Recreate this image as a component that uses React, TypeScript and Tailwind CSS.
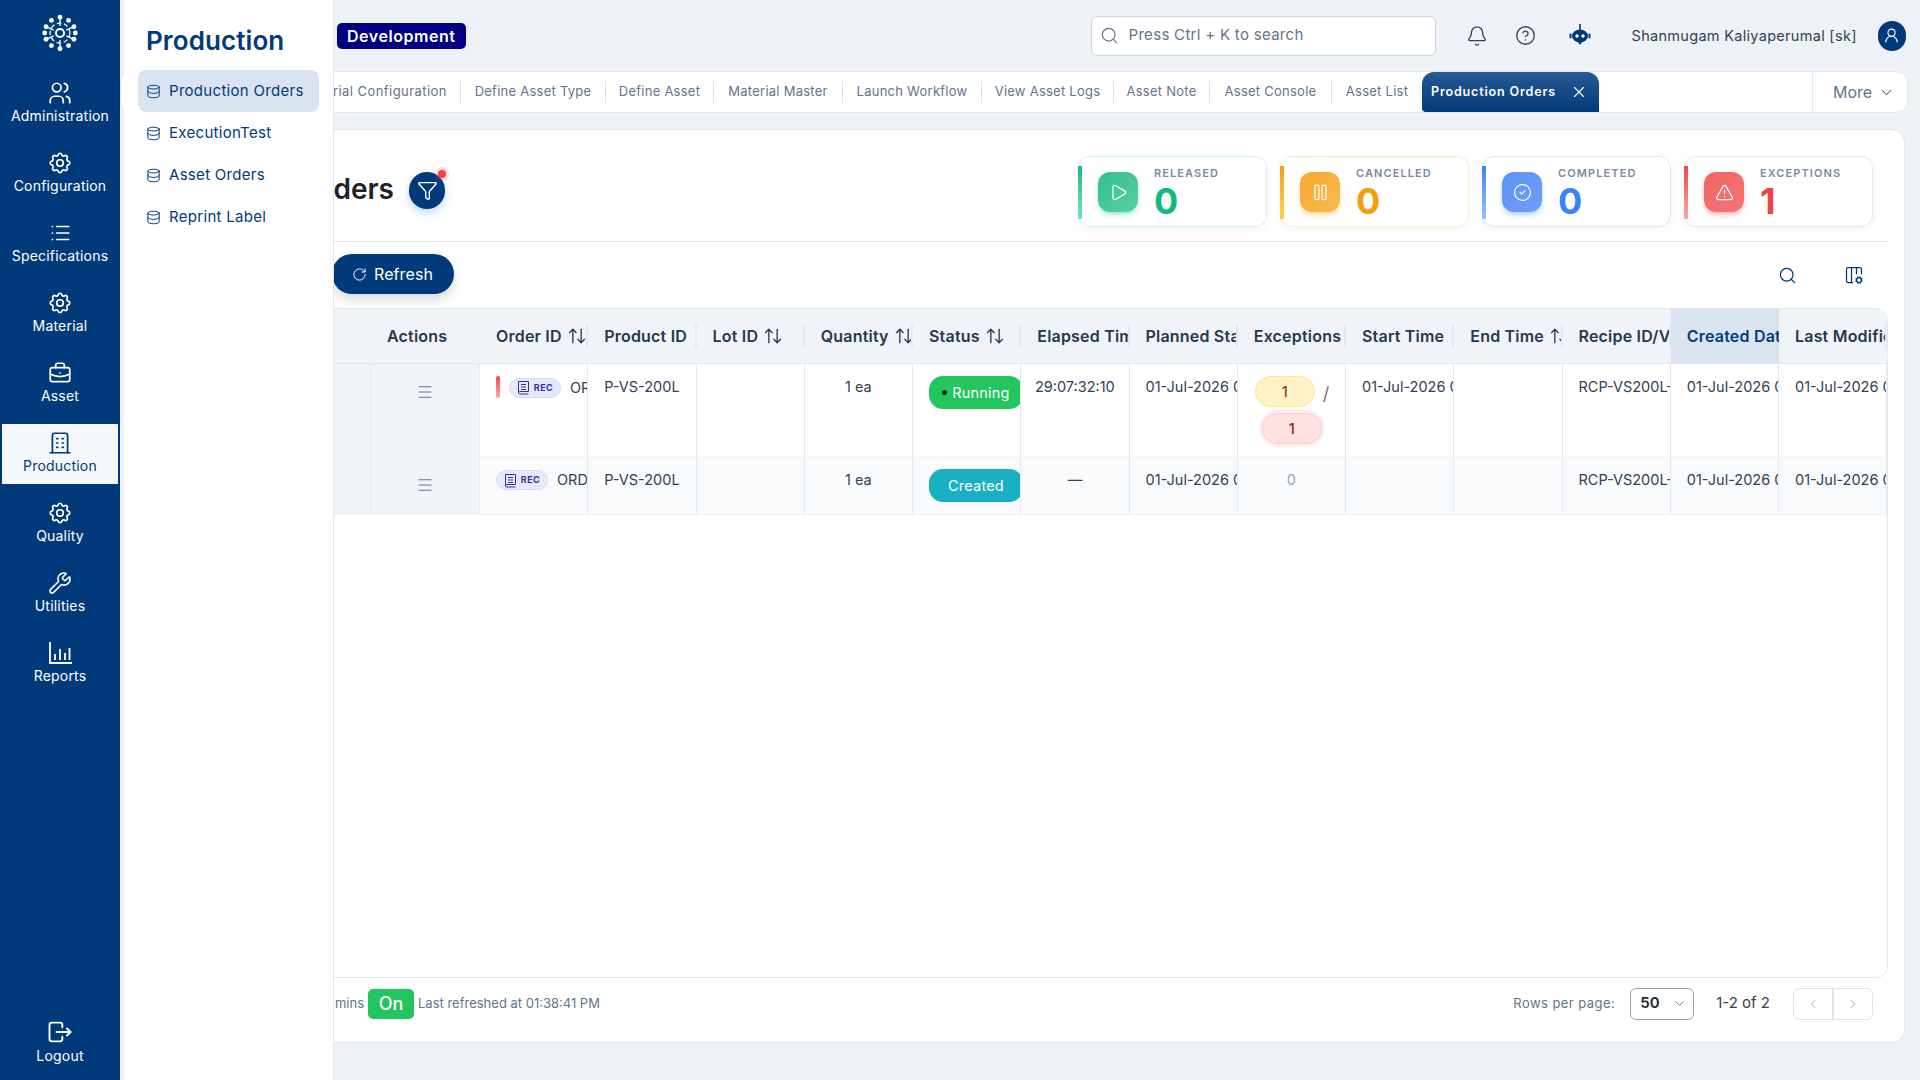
import React from 'react'
import {
  ArrowUpDown,
  Bell,
  ChevronDown,
  ChevronLeft,
  ChevronRight,
  CircleHelp,
  Columns3Cog,
  Database,
  Funnel,
  Menu,
  Play,
  Pause,
  CircleCheck,
  RotateCw,
  Search,
  TriangleAlert,
  UserRound,
  Wrench,
  X,
} from 'lucide-react'
import { TbBriefcase, TbBuilding, TbList, TbLogout, TbSettings, TbUsers } from 'react-icons/tb'

function Logo() {
  const dots: [number, number][] = [
    [20, 2.5], [29.5, 6], [35.5, 13], [37, 20], [35.5, 27], [29.5, 34], [20, 37.5], [10.5, 34], [4.5, 27], [3, 20], [4.5, 13], [10.5, 6],
  ]
  return (
    <svg width="36" height="38" viewBox="0 0 40 40" fill="none" stroke="white" strokeWidth="2.2" className="mt-[2px]">
      <circle cx="20" cy="20" r="4.5" />
      <circle cx="20" cy="20" r="11" strokeWidth="1.4" strokeDasharray="5 3" />
      {dots.map(([x, y], i) => (
        <g key={i}>
          <circle cx={x} cy={y} r="2.7" fill="white" stroke="none" />
          {i % 2 === 0 && <line x1={x} y1={y} x2={20 + (x - 20) * 0.45} y2={20 + (y - 20) * 0.45} strokeWidth="1.5" />}
        </g>
      ))}
    </svg>
  )
}

function ReportsIcon() {
  return (
    <svg width="24" height="24" viewBox="0 0 24 24" fill="none" stroke="white" strokeWidth="1.8">
      <path d="M2 1v21h22" />
      <path d="M7 13v6M12 8v11M17 12v7M21.5 7v12" />
    </svg>
  )
}

function BotIcon() {
  return (
    <svg width="22" height="26" viewBox="0 0 22 26" fill="#013a7a">
      <rect x="10.2" y="1" width="1.6" height="6" />
      <path d="M3 13a8 6.5 0 0 1 16 0a8 6.5 0 0 1-16 0z" />
      <rect x="0.5" y="10.5" width="2" height="5" rx="1" />
      <rect x="19.5" y="10.5" width="2" height="5" rx="1" />
      <path d="M9 19h4l-2 3z" />
      <circle cx="8" cy="13" r="1.7" fill="white" />
      <circle cx="14" cy="13" r="1.7" fill="white" />
    </svg>
  )
}

const railItems = [
  { label: 'Administration', icon: <TbUsers size={26} strokeWidth={1.6} /> },
  { label: 'Configuration', icon: <TbSettings size={26} strokeWidth={1.6} /> },
  { label: 'Specifications', icon: <TbList size={26} strokeWidth={1.6} /> },
  { label: 'Material', icon: <TbSettings size={26} strokeWidth={1.6} /> },
  { label: 'Asset', icon: <TbBriefcase size={26} strokeWidth={1.6} /> },
  { label: 'Production', icon: <TbBuilding size={26} strokeWidth={1.6} />, active: true },
  { label: 'Quality', icon: <TbSettings size={26} strokeWidth={1.6} /> },
  { label: 'Utilities', icon: <Wrench size={24} strokeWidth={1.6} /> },
  { label: 'Reports', icon: <ReportsIcon /> },
]

function RailItem({ label, icon, active }: { label: string; icon: React.ReactNode; active?: boolean }) {
  return (
    <div
      className={`mx-[2px] flex h-[60px] flex-col items-center justify-start pt-[6px] text-[14px] leading-[20px] tracking-[0.2px] ${
        active ? 'bg-[#f5f8fc] text-[#013a7a]' : 'text-white'
      }`}
    >
      <span className="flex h-[26px] items-center">{icon}</span>
      <span>{label}</span>
    </div>
  )
}

function Rail() {
  return (
    <aside className="flex h-full w-[120px] shrink-0 flex-col bg-[#013a7a] pb-[8px]">
      <div className="flex h-[64px] items-center justify-center">
        <Logo />
      </div>
      <nav className="mt-[10px] flex flex-col gap-[10px]">
        {railItems.map((item) => (
          <RailItem key={item.label} {...item} />
        ))}
      </nav>
      <div className="mt-auto flex h-[60px] flex-col items-center justify-center text-[14px] leading-[20px] tracking-[0.2px] text-white">
        <TbLogout size={28} strokeWidth={1.6} />
        <span>Logout</span>
      </div>
    </aside>
  )
}

function Flyout() {
  const items = ['Production Orders', 'ExecutionTest', 'Asset Orders', 'Reprint Label']
  return (
    <div className="absolute inset-y-0 left-[4px] z-20 w-[210px] border-r border-[#e2e8f0] bg-white pr-[14px] pl-[14px] text-[#013a7a]">
      <h2 className="pt-[24px] pl-[8px] text-[26px] leading-[34px] font-semibold tracking-[0.1px]">Production</h2>
      <div className="mt-[12px] flex flex-col">
        {items.map((item, i) => (
          <div
            key={item}
            className={`flex h-[42px] items-center gap-[8px] rounded-[8px] pl-[8px] text-[15px] tracking-[0.3px] ${
              i === 0 ? 'bg-[#dae4f0]' : ''
            }`}
          >
            <Database size={15} strokeWidth={1.6} />
            <span>{item}</span>
          </div>
        ))}
      </div>
    </div>
  )
}

function Header() {
  return (
    <header className="flex h-[71px] items-center">
      <span className="ml-[217px] rounded-[5px] bg-[#010080] px-[10px] py-[2px] text-[16px] leading-[22px] font-semibold tracking-[0.55px] text-white">
        Development
      </span>
      <div className="ml-[625px] flex h-[40px] w-[345px] items-center gap-[10px] rounded-[6px] border border-[#cbd5e1] bg-white px-[8px] text-[15px] tracking-[0.3px] text-[#64748b]">
        <Search size={19} strokeWidth={1.5} />
        <span>Press Ctrl + K to search</span>
      </div>
      <div className="ml-[30px] flex items-center text-[#334155]">
        <Bell size={22} strokeWidth={1.5} />
        <CircleHelp size={21} strokeWidth={1.5} className="ml-[27px]" />
        <span className="ml-[33px]">
          <BotIcon />
        </span>
      </div>
      <span className="ml-[41px] w-[226px] text-[14.5px] tracking-[0.3px] whitespace-nowrap text-[#334155]">Shanmugam Kaliyaperumal [sk]</span>
      <span className="ml-[20px] flex h-[30px] w-[28px] items-center justify-center rounded-full bg-[#013a7a] text-white">
        <UserRound size={17} strokeWidth={1.6} />
      </span>
    </header>
  )
}

const tabs = [
  { label: 'Define Asset Type', w: 'w-[145px]' },
  { label: 'Define Asset', w: 'w-[108px]' },
  { label: 'Material Master', w: 'w-[129px]' },
  { label: 'Launch Workflow', w: 'w-[139px]' },
  { label: 'View Asset Logs', w: 'w-[132px]' },
  { label: 'Asset Note', w: 'w-[96px]' },
  { label: 'Asset Console', w: 'w-[122px]' },
]

function TabBar() {
  return (
    <div className="mr-[12px] flex h-[42px] rounded-[12px] border border-[#e2e8f0] bg-white text-[13px] tracking-[0.25px] text-[#64748b]">
      <div className="flex min-w-0 flex-1 items-center justify-end overflow-hidden">
        <div className="flex h-[22px] shrink-0 items-center border-r border-[#d9dfe7] pr-[13px] tracking-[0.45px] whitespace-nowrap">
          Material Configuration
        </div>
        {tabs.map((t) => (
          <div key={t.label} className={`flex h-[22px] shrink-0 items-center justify-center border-r border-[#d9dfe7] ${t.w}`}>
            {t.label}
          </div>
        ))}
        <div className="flex h-[22px] w-[90px] shrink-0 items-center justify-center">Asset List</div>
        <div className="flex h-[40px] w-[177px] shrink-0 items-center justify-between rounded-t-[12px] rounded-bl-[4px] bg-gradient-to-b from-[#255a93] to-[#013a7a] pr-[11px] pl-[9px] text-[12.5px] font-semibold tracking-[0.85px] whitespace-nowrap text-white">
          Production Orders
          <X size={18} strokeWidth={1.5} />
        </div>
      </div>
      <div className="w-[213px] shrink-0" />
      <div className="flex w-[95px] shrink-0 items-center justify-center gap-[6px] border-l border-[#e2e8f0] pl-[8px] text-[16px] tracking-normal">
        More
        <ChevronDown size={17} strokeWidth={1.6} />
      </div>
    </div>
  )
}

const stats = [
  {
    label: 'RELEASED',
    value: '0',
    border: 'border-[#d1f5e6]',
    bar: 'from-[#10b981] to-[#6ee7b7]',
    tile: 'from-[#34bf8e] to-[#57cfa4] shadow-[#10b981]/30',
    text: 'text-[#10b981]',
    icon: <Play size={19} strokeWidth={1.5} />,
  },
  {
    label: 'CANCELLED',
    value: '0',
    border: 'border-[#fdeccb]',
    bar: 'from-[#f59e0b] to-[#fcd34d]',
    tile: 'from-[#f7a92f] to-[#f9b94f] shadow-[#f59e0b]/30',
    text: 'text-[#f59e0b]',
    icon: <Pause size={19} strokeWidth={1.5} />,
  },
  {
    label: 'COMPLETED',
    value: '0',
    border: 'border-[#dbe7fe]',
    bar: 'from-[#3b82f6] to-[#93c5fd]',
    tile: 'from-[#5b93f5] to-[#6f9ff7] shadow-[#3b82f6]/30',
    text: 'text-[#3b82f6]',
    icon: <CircleCheck size={19} strokeWidth={1.5} />,
  },
  {
    label: 'EXCEPTIONS',
    value: '1',
    border: 'border-[#fde0e0]',
    bar: 'from-[#ef4444] to-[#fca5a5]',
    tile: 'from-[#f16363] to-[#f47676] shadow-[#ef4444]/30',
    text: 'text-[#ef4444]',
    icon: <TriangleAlert size={19} strokeWidth={1.5} />,
  },
]

function StatCard({ s }: { s: (typeof stats)[number] }) {
  return (
    <div className={`relative flex h-[71px] w-[189px] rounded-[12px] border bg-white shadow-[0_2px_8px_rgba(15,23,42,0.05)] ${s.border}`}>
      <span className={`absolute top-[9px] -left-px h-[53px] w-[4px] bg-gradient-to-b ${s.bar}`} />
      <div className={`mt-[15px] ml-[19px] flex h-[40px] w-[40px] items-center justify-center rounded-[12px] bg-gradient-to-br text-white shadow-md ${s.tile}`}>
        {s.icon}
      </div>
      <div className="ml-[16px] pt-[9px]">
        <div className="text-[11px] leading-[14px] font-semibold tracking-[1.1px] text-[#7b8aa0]">{s.label}</div>
        <div className={`mt-[3px] text-[36px] leading-[36px] font-bold ${s.text}`}>{s.value}</div>
      </div>
    </div>
  )
}

const columns = [
  { label: 'Order ID', sort: true },
  { label: 'Product ID' },
  { label: 'Lot ID', sort: true },
  { label: 'Quantity', sort: true },
  { label: 'Status', sort: true },
  { label: 'Elapsed Time' },
  { label: 'Planned Start' },
  { label: 'Exceptions' },
  { label: 'Start Time' },
  { label: 'End Time', sort: true },
  { label: 'Recipe ID/Version' },
  { label: 'Created Date', active: true },
  { label: 'Last Modified' },
]

function HeaderCell({ label, sort, active }: { label: string; sort?: boolean; active?: boolean }) {
  return (
    <div
      className={`relative flex h-full w-[108.25px] shrink-0 items-center gap-[5px] overflow-hidden pl-[16px] text-[16px] font-semibold tracking-[0.2px] whitespace-nowrap ${
        active ? 'bg-[#dae4f0] text-[#013a7a]' : 'text-[#27384a]'
      }`}
    >
      <span className="shrink-0">{label}</span>
      {sort && <ArrowUpDown size={20} strokeWidth={1.6} className="shrink-0" />}
      {!active && <span className="absolute top-[16px] right-0 h-[22px] w-[2px] bg-[#e2e8f0]" />}
    </div>
  )
}

function Cell({ children, center }: { children?: React.ReactNode; center?: boolean }) {
  return (
    <div
      className={`h-full w-[108.25px] shrink-0 overflow-hidden border-r border-[#e2e8f0] pt-[13px] text-[14.5px] leading-[20px] whitespace-nowrap text-[#334155] ${
        center ? 'text-center' : 'pl-[16px]'
      }`}
    >
      {children}
    </div>
  )
}

function RecChip() {
  return (
    <span className="inline-flex h-[20px] w-[52px] shrink-0 items-center justify-center gap-[4px] rounded-full border border-[#d5dcfb] bg-[#e4e9fd] text-[9px] font-bold tracking-[0.5px] text-[#3730a3]">
      <svg width="13" height="15" viewBox="0 0 13 15" fill="none" stroke="#3730a3" strokeWidth="1">
        <path d="M1.5 12V1.5h10v10H2.8A1.3 1.3 0 0 0 1.5 13a1.2 1.2 0 0 0 1.3 1h8.7" />
        <path d="M4 4.5h5M4 7h5M4 9.5h5" />
      </svg>
      REC
    </span>
  )
}

function StatusPill({ color, children }: { color: string; children: React.ReactNode }) {
  return (
    <div className="h-full w-[108.25px] shrink-0 overflow-hidden border-r border-[#e2e8f0] pt-[12px] pl-[16px]">
      <span className={`flex h-[33px] w-[94px] items-center justify-center gap-[5px] rounded-[14px] text-[14.5px] tracking-[0.2px] text-white ${color}`}>
        {children}
      </span>
    </div>
  )
}

function LeadCells() {
  return (
    <>
      <div className="h-full w-[223px] shrink-0 border-r border-[#e2e8f0] bg-[#f0f4f9]" />
      <div className="flex h-full w-[109px] shrink-0 justify-center border-r border-[#e2e8f0] bg-[#f0f4f9] pt-[19px] text-[#64748b]">
        <Menu size={18} strokeWidth={1.5} />
      </div>
    </>
  )
}

const DATE = '01-Jul-2026 01:38:41 PM'
const RECIPE = 'RCP-VS200L-0001/1'

function DataTable() {
  return (
    <div className="mr-[16px] ml-[16px] h-[670px] overflow-hidden rounded-[12px] border border-[#e2e8f0]">
      <div className="flex h-[55px] border-b border-[#e2e8f0] bg-[#f0f4f9]">
        <div className="w-[223px] shrink-0" />
        <div className="flex w-[109px] shrink-0 items-center pl-[16px] text-[16px] font-semibold tracking-[0.2px] text-[#27384a]">Actions</div>
        {columns.map((c) => (
          <HeaderCell key={c.label} {...c} />
        ))}
      </div>

      <div className="flex h-[92px] bg-white">
        <LeadCells />
        <Cell>
          <div className="flex items-center gap-[9px]">
            <span className="-mt-px h-[22px] w-[4px] shrink-0 rounded-[2px] bg-gradient-to-b from-[#ef4444] to-[#fca5a5]" />
            <RecChip />
            <span>ORD-000124</span>
          </div>
        </Cell>
        <Cell>P-VS-200L</Cell>
        <Cell />
        <Cell center>1 ea</Cell>
        <StatusPill color="bg-[#22c55e]">
          <span className="h-[5px] w-[5px] rounded-full bg-[#0b2e1a]" />
          Running
        </StatusPill>
        <Cell center>29:07:32:10</Cell>
        <Cell>{DATE}</Cell>
        <div className="relative h-full w-[108.25px] shrink-0 border-r border-[#e2e8f0] text-[14.5px] font-medium">
          <span className="absolute top-[12px] left-[17px] flex h-[31px] w-[60px] items-center justify-center rounded-full border border-[#fde68a] bg-[#fef3c7] text-[#92400e]">
            1
          </span>
          <span className="absolute top-[16px] left-[85px] text-[18px] font-normal text-[#737373]">/</span>
          <span className="absolute top-[49px] left-[24px] flex h-[31px] w-[60px] items-center justify-center rounded-full border border-[#fecaca] bg-[#fee2e2] text-[#991b1b] shadow-[0_0_0_3px_rgba(254,226,226,0.6)]">
            1
          </span>
        </div>
        <Cell>{DATE}</Cell>
        <Cell />
        <Cell>{RECIPE}</Cell>
        <Cell>{DATE}</Cell>
        <Cell>{DATE}</Cell>
      </div>

      <div className="flex h-[59px] border-y border-[#f1f5f9] bg-[#f9fafb]">
        <LeadCells />
        <Cell>
          <div className="flex items-center gap-[9px]">
            <RecChip />
            <span>ORD-000123</span>
          </div>
        </Cell>
        <Cell>P-VS-200L</Cell>
        <Cell />
        <Cell center>1 ea</Cell>
        <StatusPill color="bg-[#1ab0c4]">Created</StatusPill>
        <Cell center>—</Cell>
        <Cell>{DATE}</Cell>
        <Cell center>
          <span className="text-[#94a3b8]">0</span>
        </Cell>
        <Cell />
        <Cell />
        <Cell>{RECIPE}</Cell>
        <Cell>{DATE}</Cell>
        <Cell>{DATE}</Cell>
      </div>
    </div>
  )
}

function Footer() {
  return (
    <div className="flex h-[65px] items-center pb-[14px] text-[13px] text-[#64748b]">
      <span className="w-[233px] text-right whitespace-nowrap">Auto refresh in 5 mins</span>
      <span className="ml-[4px] flex h-[30px] w-[46px] items-center justify-center rounded-[5px] bg-[#22c55e] text-[18px] font-medium text-white">
        On
      </span>
      <span className="ml-[4px]">Last refreshed at 01:38:41 PM</span>
      <span className="ml-auto tracking-[0.45px]">Rows per page:</span>
      <div className="ml-[15px] flex h-[32px] w-[64px] items-center justify-between rounded-[6px] border border-[#a3a3a3] pr-[6px] pl-[9px] text-[15px] font-semibold text-[#262626]">
        50
        <ChevronDown size={15} strokeWidth={1.5} className="text-[#6b7280]" />
      </div>
      <span className="ml-[22px] text-[15px] text-[#404040]">1-2 of 2</span>
      <div className="mr-[31px] ml-[23px] flex h-[32px] w-[80px] rounded-[6px] border border-[#e2e2e2] text-[#a3a3a3]">
        <span className="flex flex-1 items-center justify-center border-r-2 border-[#e2e2e2]">
          <ChevronLeft size={14} strokeWidth={1.5} />
        </span>
        <span className="flex flex-1 items-center justify-center">
          <ChevronRight size={14} strokeWidth={1.5} />
        </span>
      </div>
    </div>
  )
}

function OrdersCard() {
  return (
    <section className="mt-[16px] mr-[15px] ml-[10px] h-[914px] rounded-[14px] border border-[#e2e8f0] bg-white">
      <div className="mx-[16px] flex h-[112px] items-start border-b border-[#e2e8f0] pr-[15px]">
        <div className="-ml-[16px] flex items-start pt-[42px]">
          <h1 className="-mt-px w-[263px] text-right text-[28px] leading-[36px] font-semibold whitespace-nowrap text-[#1f2328]">Production Orders</h1>
          <span className="relative ml-[15px] flex h-[37px] w-[36px] items-center justify-center rounded-full bg-[#013a7a] text-white shadow-[0_4px_10px_rgba(59,130,246,0.3)]">
            <Funnel size={21} strokeWidth={1.6} />
            <span className="absolute -top-[2px] -right-[1px] h-[8px] w-[8px] rounded-full bg-[#ef4444] shadow-[0_0_0_3px_rgba(239,68,68,0.2)]" />
          </span>
        </div>
        <div className="ml-auto flex gap-[13px] pt-[26px]">
          {stats.map((s) => (
            <StatCard key={s.label} s={s} />
          ))}
        </div>
      </div>

      <div className="flex h-[66px] items-center pr-[40px] pl-[201px]">
        <button className="-mt-[2px] flex h-[40px] w-[122px] items-center gap-[7px] rounded-full bg-[#013a7a] pl-[20px] text-[16px] tracking-[0.1px] text-white shadow-[0_6px_12px_rgba(15,23,42,0.15)]">
          <RotateCw size={15} strokeWidth={1.6} />
          Refresh
        </button>
        <div className="ml-auto flex items-center gap-[47px] text-[#013a7a]">
          <Search size={19} strokeWidth={1.6} />
          <Columns3Cog size={20} strokeWidth={1.5} />
        </div>
      </div>

      <DataTable />
      <Footer />
    </section>
  )
}

export default function App() {
  return (
    <div className="flex h-screen w-full overflow-hidden bg-[#eef2f7] font-['Inter',sans-serif]">
      <Rail />
      <main className="relative min-w-0 flex-1">
        <Flyout />
        <Header />
        <TabBar />
        <OrdersCard />
      </main>
    </div>
  )
}
